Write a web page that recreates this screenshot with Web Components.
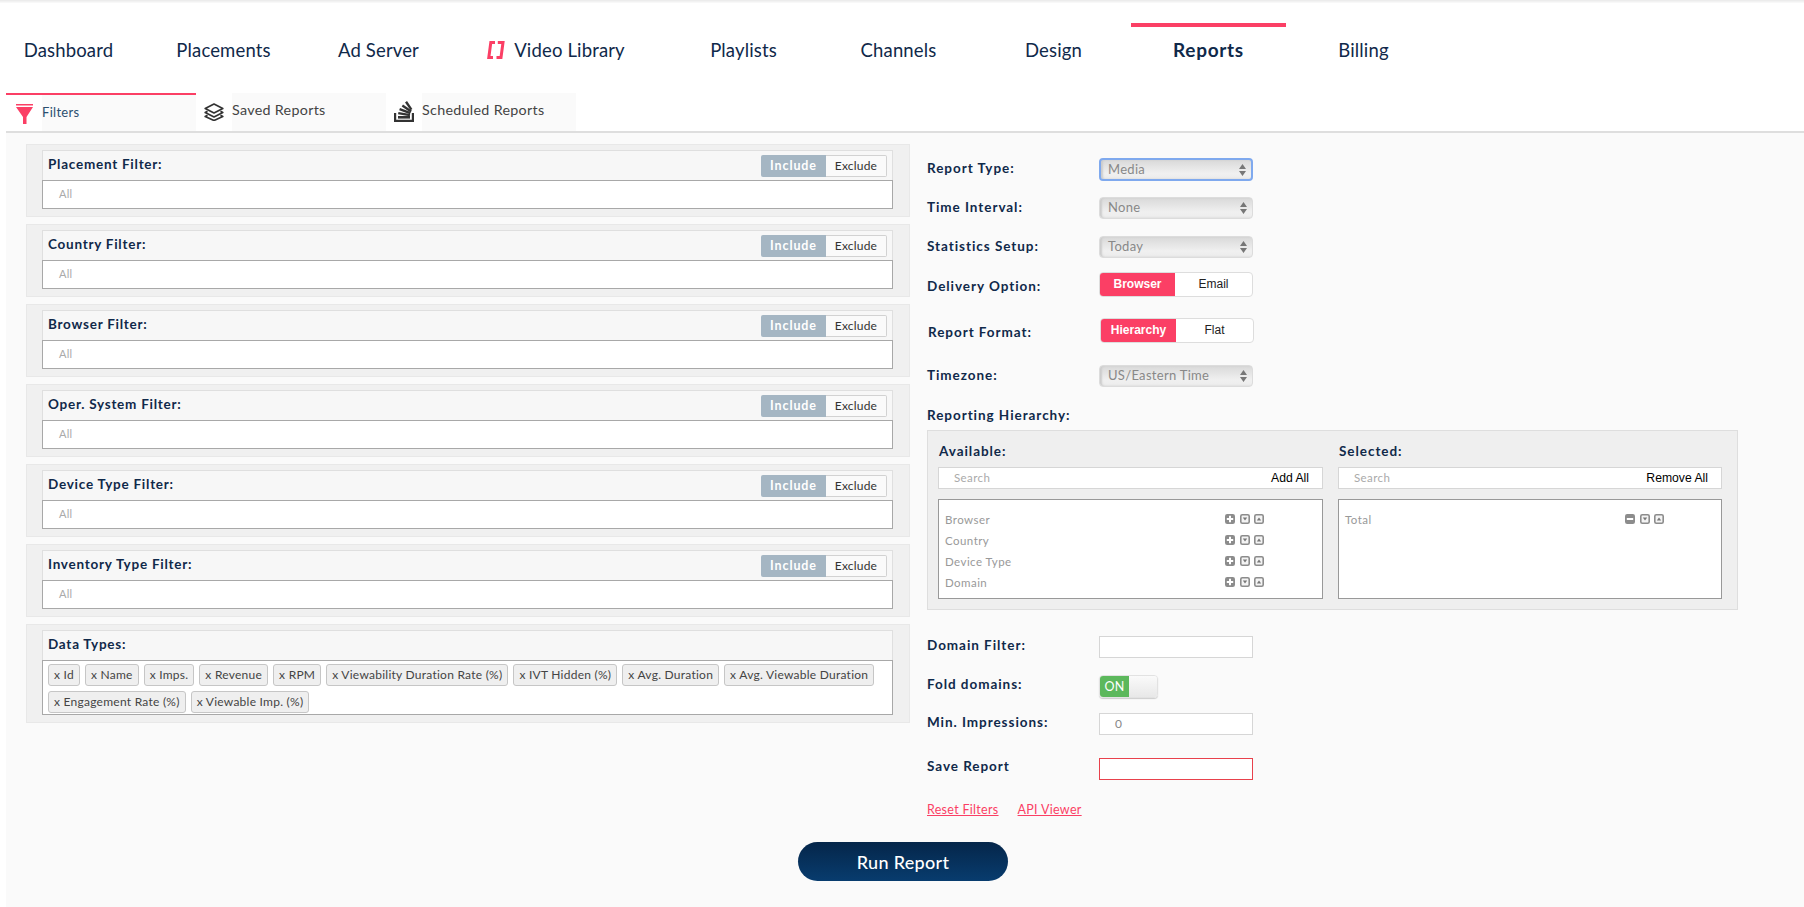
<!DOCTYPE html>
<html lang="en"><head><meta charset="utf-8"><title>Reports</title>
<style>
html,body{margin:0;padding:0;background:#fff}
body{width:1804px;height:907px;overflow:hidden;font-family:Lato,"Open Sans",sans-serif;color:#10294a}
</style></head><body>
<app-shell>
  <top-nav slot="nav">
    <nav-item style="--w:137px">Dashboard</nav-item>
    <nav-item style="--w:155px;--ml:9px">Placements</nav-item>
    <nav-item style="--w:155px">Ad Server</nav-item>
    <nav-item style="--w:200px" icon>Video Library</nav-item>
    <nav-item style="--w:155px;--ml:10px">Playlists</nav-item>
    <nav-item style="--w:155px">Channels</nav-item>
    <nav-item style="--w:155px">Design</nav-item>
    <nav-item style="--w:155px" active>Reports</nav-item>
    <nav-item style="--w:155px">Billing</nav-item>
  </top-nav>
  <sub-tabs slot="tabs">
    <sub-tab active icon="funnel" style="--w:190px;--ml:6px">Filters</sub-tab>
    <sub-tab icon="layers" style="--w:190px">Saved Reports</sub-tab>
    <sub-tab icon="stack" style="--w:190px">Scheduled Reports</sub-tab>
  </sub-tabs>
  <filter-column slot="left">
    <filter-block title="Placement Filter:"></filter-block>
    <filter-block title="Country Filter:"></filter-block>
    <filter-block title="Browser Filter:"></filter-block>
    <filter-block title="Oper. System Filter:"></filter-block>
    <filter-block title="Device Type Filter:"></filter-block>
    <filter-block title="Inventory Type Filter:"></filter-block>
    <data-types></data-types>
  </filter-column>
  <report-form slot="right"></report-form>
  <run-button slot="run">Run Report</run-button>
</app-shell>
<script>
function comp(name, css, html){
  customElements.define(name, class extends HTMLElement{
    constructor(){super();const r=this.attachShadow({mode:'open'});r.innerHTML='<style>'+css+'</style>'+(typeof html==='function'?html(this):html);}
  });
}
const FONT='Lato,"Open Sans",sans-serif';
const ARIAL='"Liberation Sans",Arial,sans-serif';

comp('app-shell',`
:host{display:block;width:1804px;height:907px;overflow:hidden;background:#fff}
.shadow{height:3px;background:linear-gradient(#e9e9e9,#fbfbfb)}
.main{margin-left:6px;background:#fafafa;height:776px;display:flex;flex-direction:column;box-sizing:border-box;border-top:2px solid #dedede}
.cols{display:flex;padding-top:11px}
`,`<div class="shadow"></div><slot name="nav"></slot><slot name="tabs"></slot>
<div class="main"><div class="cols"><slot name="left"></slot><slot name="right"></slot></div><slot name="run"></slot></div>`);

comp('top-nav',`:host{display:flex;height:90px;box-sizing:border-box;padding-top:20px}`,`<slot></slot>`);

comp('nav-item',`
:host{display:flex;justify-content:center;box-sizing:border-box;width:var(--w);margin-left:var(--ml,0);height:70px;padding-top:12px;font:400 18.5px/22px ${FONT};letter-spacing:.15px;color:#10294a;border-top:4px solid transparent;gap:9px}
:host([active]){border-top-color:#fb3f65;font-weight:700;font-size:19px;letter-spacing:.7px}
svg{display:none;width:18px;height:18px;margin-top:2px}
:host([icon]) svg{display:block}
`,`<svg viewBox="0 0 18 18" fill="none" stroke="#fb3f65" stroke-width="3"><path d="M8 1.500H3.800L1.800 16.500H6"/><path d="M10.800 1.500H16L14 16.500H9.500"/></svg><span><slot></slot></span>`);

comp('sub-tabs',`:host{display:flex;height:38px}`,`<slot></slot>`);

const tabIcons={
 funnel:`<svg style="margin-top:0" width="17" height="20" viewBox="0 0 17 20" fill="#fb3f65"><path d="M0 0h17v1.500H0z"/><path d="M0 3h17l-6.500 10v7h-3.500v-7z"/></svg>`,
 layers:`<svg style="margin-top:1px" width="20" height="18" viewBox="0 0 20 18" fill="none" stroke="#333" stroke-width="1.700" stroke-linejoin="round"><path d="M10 1 18.800 5.500 10 10 1.200 5.500z"/><path d="M3.500 8.200 1.200 9.500 10 14 18.800 9.500 16.500 8.200"/><path d="M3.500 12.200 1.200 13.500 10 17.500 18.800 13.500 16.500 12.200"/></svg>`,
 stack:`<svg style="margin-top:-1px" width="20" height="21" viewBox="0 0 20 21" fill="#333"><path d="M0 12h2.200v6.800h15.600V12H20v9H0z"/><path d="M4 15h12v2.600H4z"/><path d="M4.500 11 16.200 13l-.4 2.300L4 13.300z"/><path d="M6 7 16.800 11l-.9 2.200L5.200 9.200z"/><path d="M9 3.500 17.800 9.500l-1.300 1.900L7.700 5.400z"/><path d="M13 0 18.400 8l-1.900 1.300L11 1.400z"/></svg>`
};
comp('sub-tab',`
:host{display:flex;box-sizing:border-box;width:var(--w);margin-left:var(--ml,0);height:38px;font:400 14.3px/16px ${FONT};letter-spacing:.3px;color:#444}
:host([active]){border-top:2px solid #fb3f65;color:#2b4f70;font-size:13px}
.ic{width:36px;flex:none;display:flex;justify-content:center;align-items:flex-start;padding-top:9px;box-sizing:border-box;background:#fff}
.t{flex:1;background:#fafafa;padding-top:9px;box-sizing:border-box}
svg{display:block}
`,h=>`<div class="ic">${tabIcons[h.getAttribute('icon')]}</div><div class="t"><slot></slot></div>`);

comp('filter-column',`:host{display:flex;flex-direction:column;gap:7px;margin-left:20px;width:884px;flex:none}`,`<slot></slot>`);

comp('seg-switch',`
:host{display:flex;margin-left:auto;height:22px;box-sizing:border-box;font:400 12px/20px ${FONT}}
.a{width:65px;background:#a5b6c3;color:#fff;font-weight:700;font-size:12.5px;text-align:center;border-radius:2px 0 0 2px;line-height:22px;letter-spacing:.9px}
.b{width:61px;background:#fafafa;border:1px solid #d2d2d2;border-left:0;border-radius:0 2px 2px 0;color:#333;text-align:center;box-sizing:border-box;letter-spacing:.2px}
`,`<div class="a">Include</div><div class="b">Exclude</div>`);

comp('filter-shell',`
:host{display:block;box-sizing:border-box;background:#f0f0f0;border:1px solid #e8e8e8;padding:5px 16px 7px 15px}
.h{height:30px;box-sizing:border-box;background:#f7f7f7;border:1px solid #dfdfdf;border-bottom:0;display:flex;align-items:flex-start;padding:4px 5px 0 5px}
.l{font:700 13.5px/17px ${FONT};letter-spacing:.75px;color:#10294a;padding-top:1px}
.b{background:#fff;border:1px solid #a8a8a8;box-sizing:border-box}
`,h=>`<div class="h"><div class="l">${h.getAttribute('title')}</div><slot name="sw"></slot></div><div class="b"><slot></slot></div>`);

comp('filter-block',`
:host{display:block}
.all{height:27px;font:400 11px/26px ${FONT};color:#aaa;padding-left:16px;letter-spacing:.2px}
`,h=>`<filter-shell title="${h.getAttribute('title')}"><seg-switch slot="sw"></seg-switch><div class="all">All</div></filter-shell>`);

comp('data-chip',`
:host{display:inline-block;box-sizing:border-box;height:22px;background:#efefef;border:1px solid #c6c6c6;border-radius:3px;padding:0 5px;font:400 12px/19px ${FONT};letter-spacing:.25px;color:#444;white-space:nowrap}
`,`<slot></slot>`);

comp('data-types',`
:host{display:block}
.w{display:flex;flex-wrap:wrap;gap:5px;padding:3px 5px;height:53px;box-sizing:border-box;align-content:flex-start}
`,`<filter-shell title="Data Types:"><div class="w">
${['x Id','x Name','x Imps.','x Revenue','x RPM','x Viewability Duration Rate (%)','x IVT Hidden (%)','x Avg. Duration','x Avg. Viewable Duration','x Engagement Rate (%)','x Viewable Imp. (%)'].map(t=>`<data-chip>${t}</data-chip>`).join('')}
</div></filter-shell>`);

comp('form-row',`
:host{display:flex;box-sizing:border-box;align-items:flex-start;height:var(--h,39px)}
.l{width:172px;flex:none;font:700 13.5px/17px ${FONT};letter-spacing:.95px;color:#10294a;margin-top:var(--lt,2px)}
.c{width:154px;flex:none}
`,h=>`<div class="l">${h.getAttribute('label')}</div><div class="c"><slot></slot></div>`);

comp('fake-select',`
:host{display:block;box-sizing:border-box;height:22px;border:1px solid #dcdcdc;border-radius:4px;background:linear-gradient(#d9d9d9,#f0f0f0 70%,#ececec);box-shadow:inset 2px 0 2px #ccc;position:relative;font:400 13px/19px ${FONT};letter-spacing:.3px;color:#888;padding-left:8px}
:host([focus]){border:2px solid #7fa9ee;height:23px;line-height:18px;padding-left:7px}
svg{position:absolute;right:5px;top:4px}
`,`<slot></slot><svg width="7" height="12" viewBox="0 0 7 12" fill="#777"><path d="M3.500 0 7 5H0zM0 7h7l-3.500 5z"/></svg>`);

comp('two-way',`
:host{display:flex;box-sizing:border-box;height:25px;border:1px solid #ddd;border-radius:4px;background:#fff;font:400 12px/23px ${ARIAL};color:#222;overflow:hidden}
.a{width:75px;background:#fb3f65;color:#fff;font-weight:700;text-align:center}
.b{flex:1;text-align:center}
`,h=>`<div class="a">${h.getAttribute('a')}</div><div class="b">${h.getAttribute('b')}</div>`);

comp('text-box',`
:host{display:block;box-sizing:border-box;height:22px;background:#fff;border:1px solid #d6d6d6;font:400 12px/20px ${FONT};color:#888;padding-left:15px}
:host([err]){border-color:#e8414c}
`,`<slot></slot>`);

comp('toggle-switch',`
:host{display:flex;width:59px;height:23px;box-sizing:border-box;border:1px solid #e2e2e2;border-radius:4px;overflow:hidden;font:400 12.5px/21px ${FONT};letter-spacing:.3px;box-shadow:0 1px 1px #ccc}
.a{width:29px;background:#5cb85c;color:#fff;text-align:center}
.b{flex:1;background:linear-gradient(#fafafa,#e8e8e8)}
`,`<div class="a">ON</div><div class="b"></div>`);

const ctl={
 plus:`<svg width="10" height="10" viewBox="0 0 10 10"><rect width="10" height="10" rx="2.200" fill="#8c8c8c"/><path d="M5 1.800v6.400M1.800 5h6.400" stroke="#fff" stroke-width="2"/></svg>`,
 minus:`<svg width="10" height="10" viewBox="0 0 10 10"><rect width="10" height="10" rx="2.200" fill="#8c8c8c"/><path d="M1.800 5h6.400" stroke="#fff" stroke-width="2"/></svg>`,
 down:`<svg width="10" height="10" viewBox="0 0 10 10"><rect x=".8" y=".8" width="8.400" height="8.400" rx="1.500" fill="#f4f4f4" stroke="#8c8c8c" stroke-width="1.600"/><path d="M2.800 3.600h4.400L5 6.600z" fill="#777"/></svg>`,
 up:`<svg width="10" height="10" viewBox="0 0 10 10"><rect x=".8" y=".8" width="8.400" height="8.400" rx="1.500" fill="#f4f4f4" stroke="#8c8c8c" stroke-width="1.600"/><path d="M2.800 6.400h4.400L5 3.400z" fill="#777"/></svg>`
};
comp('hier-item',`
:host{display:flex;height:21px;flex:none;font:400 11.5px/21px ${FONT};letter-spacing:.45px;color:#999;padding-left:6px}
.t{width:280px;flex:none}
.i{display:flex;gap:4.500px;padding-top:5px}
svg{display:block}
`,h=>`<div class="t"><slot></slot></div><div class="i">${h.hasAttribute('rem')?ctl.minus:ctl.plus}${ctl.down}${ctl.up}</div>`);

comp('hier-col',`
:host{display:block;width:var(--cw)}
.h{font:700 13.5px/17px ${FONT};letter-spacing:.95px;color:#10294a;height:19px;padding:4px 0 0 1px;box-sizing:border-box}
.s{display:flex;justify-content:space-between;box-sizing:border-box;height:22px;background:#fff;border:1px solid #d6d6d6;font:400 11.5px/20px ${FONT};letter-spacing:.4px;color:#aaa;padding:0 13px 0 15px;margin-top:9px}
.s b{font:400 12.2px/21px ${ARIAL};letter-spacing:0;color:#000}
.l{box-sizing:border-box;height:100px;margin-top:10px;background:#fff;border:1px solid #999;overflow:hidden;padding-top:9px;display:flex;flex-direction:column}
`,h=>`<div class="h">${h.getAttribute('title')}</div><div class="s"><span>Search</span><b>${h.getAttribute('action')}</b></div><div class="l"><slot></slot></div>`);

comp('report-form',`
:host{display:block;width:830px;margin-left:17px;flex:none;padding-top:14px}
.hier{font:700 13.5px/17px ${FONT};letter-spacing:.95px;color:#10294a;height:23px;margin-top:2px}
.panel{box-sizing:border-box;width:811px;height:180px;background:#efefef;border:1px solid #dedede;display:flex;gap:15px;padding:8px 15px 0 10px}
.links{display:flex;gap:19px;font:400 12.5px/16px ${FONT};letter-spacing:.3px}
a{color:#fb3f65;text-decoration:underline}
`,`
<form-row label="Report Type:" style="--h:39px;--lt:2px"><fake-select focus>Media</fake-select></form-row>
<form-row label="Time Interval:" style="--h:39px;--lt:2px"><fake-select>None</fake-select></form-row>
<form-row label="Statistics Setup:" style="--h:36px;--lt:2px"><fake-select>Today</fake-select></form-row>
<form-row label="Delivery Option:" style="--h:46px;--lt:6px"><two-way a="Browser" b="Email"></two-way></form-row>
<form-row label="Report Format:" style="--h:47px;--lt:6px;margin-left:1px"><two-way a="Hierarchy" b="Flat"></two-way></form-row>
<form-row label="Timezone:" style="--h:40px;--lt:2px"><fake-select>US/Eastern Time</fake-select></form-row>
<div class="hier">Reporting Hierarchy:</div>
<div class="panel">
 <hier-col title="Available:" action="Add All" style="--cw:385px">
  <hier-item>Browser</hier-item><hier-item>Country</hier-item><hier-item>Device Type</hier-item><hier-item>Domain</hier-item><hier-item></hier-item>
 </hier-col>
 <hier-col title="Selected:" action="Remove All" style="--cw:384px"><hier-item rem>Total</hier-item></hier-col>
</div>
<form-row label="Domain Filter:" style="--h:39px;--lt:1px;margin-top:26px"><text-box></text-box></form-row>
<form-row label="Fold domains:" style="--h:38px;--lt:1px"><toggle-switch></toggle-switch></form-row>
<form-row label="Min. Impressions:" style="--h:45px;--lt:1px"><text-box>0</text-box></form-row>
<form-row label="Save Report" style="--h:44px;--lt:0"><text-box err></text-box></form-row>
<div class="links"><a>Reset Filters</a><a>API Viewer</a></div>
`);

comp('run-button',`
:host{display:flex;align-items:center;justify-content:center;box-sizing:border-box;width:210px;height:39px;margin:24px 0 0 792px;border-radius:20px;background:linear-gradient(#05264a,#083c6e);color:#fff;font:500 18px/22px ${FONT};letter-spacing:.3px}
`,`<slot></slot>`);
</script>
</body></html>
